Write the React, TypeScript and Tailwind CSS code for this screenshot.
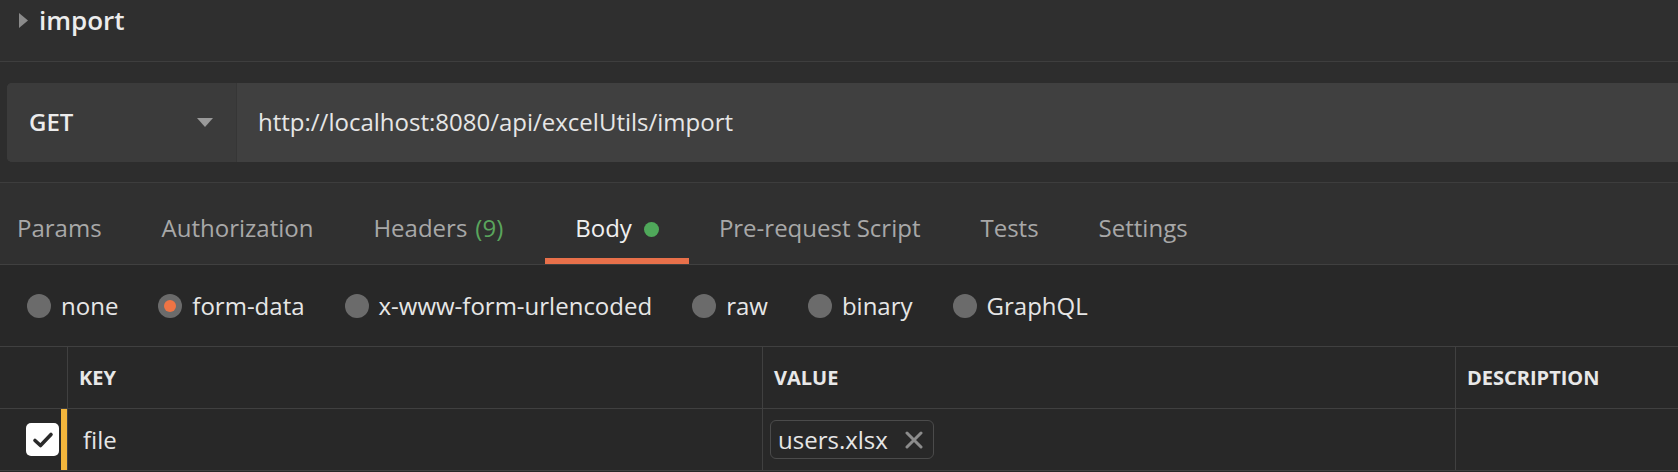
import React from 'react';

const tabs = [
    { label: 'Params' },
    { label: 'Authorization' },
    { label: 'Headers', count: '(9)' },
    { label: 'Body', active: true, dot: true },
    { label: 'Pre-request Script' },
    { label: 'Tests' },
    { label: 'Settings' },
];

const bodyTypes = ['none', 'form-data', 'x-www-form-urlencoded', 'raw', 'binary', 'GraphQL'];

const Radio: React.FC<{ checked?: boolean }> = ({ checked }) => (
    <span className="flex h-[24px] w-[24px] shrink-0 items-center justify-center rounded-full bg-[#6b6b6b]">
        {checked && <span className="h-[12px] w-[12px] rounded-full bg-[#ef7444]" />}
    </span>
);

const App: React.FC = () => {
    return (
        <div className="flex h-[472px] w-full flex-col overflow-hidden bg-[#282828] font-['Open_Sans',sans-serif]">
            {/* request name */}
            <div className="h-[62px] shrink-0 border-b border-[#3e3e3e] bg-[#2f2f2f]">
                <div className="flex h-[40px] items-center pl-[19px]">
                    <svg width="9" height="15" viewBox="0 0 9 15" className="mr-[11px]">
                        <polygon points="0,0 9,7.5 0,15" fill="#8b8b8b" />
                    </svg>
                    <span className="text-[26px] font-semibold leading-none text-[#ececec]">import</span>
                </div>
            </div>

            {/* url bar */}
            <div className="flex h-[121px] shrink-0 items-center border-b border-[#3d3d3d] bg-[#2d2d2d] pl-[7px]">
                <div className="flex h-[79px] flex-1 overflow-hidden rounded-l-[5px] bg-[#404040]">
                    <div className="flex w-[230px] shrink-0 items-center justify-between border-r border-[#363636] bg-[#3b3b3b] pl-[22px] pr-[23px]">
                        <span className="text-[24px] font-semibold text-[#ececec]">GET</span>
                        <svg width="16" height="9" viewBox="0 0 16 9">
                            <polygon points="0,0 16,0 8,9" fill="#9a9a9a" />
                        </svg>
                    </div>
                    <div className="flex items-center pl-[21px] text-[24px] text-[#e6e6e6]">
                        http://localhost:8080/api/excelUtils/import
                    </div>
                </div>
            </div>

            {/* tabs */}
            <div className="flex h-[82px] shrink-0 items-stretch border-b border-[#404040] bg-[#303030] pl-[17px]">
                {tabs.map((t, i) => (
                    <div
                        key={t.label}
                        className={`relative flex items-center pt-[9px] text-[24px] ${i === 0 ? 'pr-[30px]' : 'px-[30px]'} ${t.count ? 'mr-[12px]' : ''} ${t.active ? 'text-[#f0f0f0]' : 'text-[#a8a8a8]'}`}
                    >
                        <span>{t.label}</span>
                        {t.count && <span className="ml-[8px] text-[#5aa55d]">{t.count}</span>}
                        {t.dot && <span className="ml-[12px] mt-[2px] h-[15px] w-[15px] rounded-full bg-[#4fa85a]" />}
                        {t.active && <span className="absolute bottom-0 left-0 right-0 h-[6px] bg-[#e8704a]" />}
                    </div>
                ))}
            </div>

            {/* body types */}
            <div className="flex h-[82px] shrink-0 items-center gap-[40px] border-b border-[#404040] pl-[27px]">
                {bodyTypes.map((b) => (
                    <div key={b} className="flex items-center gap-[10px] text-[24px] text-[#e6e6e6]">
                        <Radio checked={b === 'form-data'} />
                        <span>{b}</span>
                    </div>
                ))}
            </div>

            {/* form-data table */}
            <div className="flex h-[62px] shrink-0 border-b border-[#404040] text-[20px] font-bold text-[#e8e8e8]">
                <div className="w-[68px] shrink-0 border-r border-[#404040]" />
                <div className="flex w-[695px] shrink-0 items-center border-r border-[#404040] pl-[11px]">KEY</div>
                <div className="flex w-[693px] shrink-0 items-center border-r border-[#404040] pl-[11px]">VALUE</div>
                <div className="flex flex-1 items-center pl-[11px]">DESCRIPTION</div>
            </div>
            <div className="flex h-[62px] shrink-0 border-b border-[#404040] text-[24px] text-[#e6e6e6]">
                <div className="flex w-[68px] shrink-0 items-center justify-between border-r border-[#404040] pl-[26px]">
                    <span className="flex h-[33px] w-[33px] items-center justify-center rounded-[5px] bg-white">
                        <svg width="22" height="18" viewBox="0 0 22 18">
                            <path d="M3 9.5 L8.5 14.5 L19 3.5" fill="none" stroke="#2a2a2a" strokeWidth="3.6" strokeLinecap="round" strokeLinejoin="round" />
                        </svg>
                    </span>
                    <span className="h-full w-[6px] bg-[#f2b53c]" />
                </div>
                <div className="flex w-[695px] shrink-0 items-center border-r border-[#404040] pl-[15px]">file</div>
                <div className="flex w-[693px] shrink-0 items-center border-r border-[#404040] pl-[7px]">
                    <div className="flex h-[39px] items-center gap-[17px] rounded-[6px] border border-[#4b4b4b] pl-[7px] pr-[10px]">
                        <span>users.xlsx</span>
                        <svg width="18" height="18" viewBox="0 0 18 18">
                            <path d="M2 2 L16 16 M16 2 L2 16" stroke="#8c8c8c" strokeWidth="3" strokeLinecap="round" />
                        </svg>
                    </div>
                </div>
                <div className="flex-1" />
            </div>
        </div>
    );
};

export default App;
